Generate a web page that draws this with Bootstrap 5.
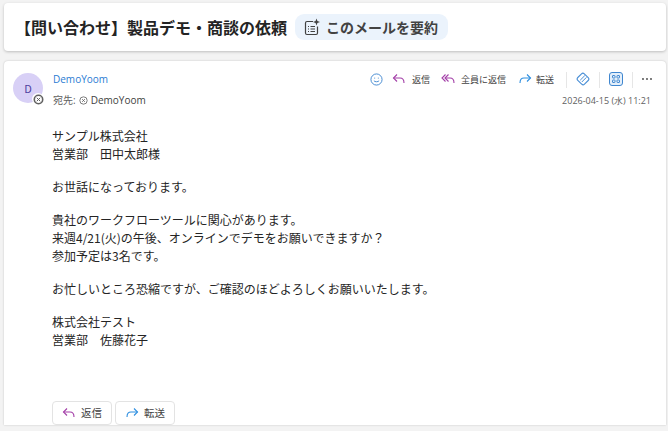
<!DOCTYPE html>
<html lang="ja">
<head>
  <meta charset="UTF-8">
  <meta name="viewport" content="width=device-width, initial-scale=1.0">
  <title>メール</title>
  <link href="https://cdn.jsdelivr.net/npm/bootstrap@5.3.0/dist/css/bootstrap.min.css" rel="stylesheet">
  <style>
    html, body { height: 431px; overflow: hidden; }
    body { background: #f3f3f3; font-family: "Noto Sans CJK JP", "Noto Sans", sans-serif; color: #242424; }
    .mail-page { padding: 3px 2px 0 4px; height: 431px; }
    .subject-bar { height: 48px; background: #fff; border-radius: 4px; box-shadow: 0 1px 3px rgba(0,0,0,.22); padding-left: 11px; }
    .subject-text { font-size: 16px; font-weight: 700; line-height: 24px; }
    .summary-btn { height: 26px; margin-left: 8px; padding: 0 10px 0 8px; background: #ebf3fc; border-radius: 9px; font-size: 14px; font-weight: 700; color: #424242; gap: 5px; }
    .mail-card { margin-top: 10px; height: 364px; background: #fff; border-radius: 4px 4px 0 0; box-shadow: 0 0 2px rgba(0,0,0,.22); position: relative; }
    .mail-head { padding: 12px 13px 0 9px; }
    .avatar-wrap { position: relative; width: 30px; height: 30px; margin-right: 10px; flex: none; }
    .avatar-circle { width: 30px; height: 30px; border-radius: 50%; background: #d8d0f6; color: #4f3f9f; font-size: 11px; }
    .avatar-status { position: absolute; right: -1px; bottom: -2px; width: 12px; height: 12px; border-radius: 50%; background: #fff; }
    .sender-name { font-family: "Open Sans", "Noto Sans CJK JP", sans-serif; font-size: 10px; line-height: 14px; font-weight: 500; color: #2b7cd3; margin-top: -1px; }
    .to-line { font-family: "Open Sans", "Noto Sans CJK JP", sans-serif; font-size: 10px; line-height: 14px; color: #424242; margin-top: 7px; gap: 3px; }
    .to-label { color: #616161; }
    .action-row { margin-top: -4px; height: 22px; font-size: 9px; color: #424242; }
    .action-row svg { margin-top: -2px; }
    .action-item { white-space: nowrap; }
    .action-smile { margin-right: 9px; margin-left: 1px; }
    .reply-item { gap: 6px; margin-right: 11px; }
    .reply-all-item { gap: 5px; margin-right: 12px; }
    .forward-item { gap: 4px; margin-right: 12px; }
    .v-sep { width: 1px; height: 16px; background: #e6e6e6; }
    .action-tool { margin: 0 9px; }
    .mail-date { font-family: "Open Sans", sans-serif; font-size: 9px; line-height: 12px; color: #616161; text-align: right; margin-top: 4px; padding-right: 2px; }
    .mail-body { padding: 20px 0 0 48px; font-size: 12px; line-height: 18px; color: #242424; }
    .mail-body p { margin: 0 0 15px; }
    .foot-actions { position: absolute; left: 48px; bottom: 0; gap: 3px; }
    .foot-btn { width: 60px; height: 24px; background: #fff; border: 1px solid #e3e3e3; border-radius: 4px; font-size: 10.5px; color: #424242; gap: 5px; padding: 0; }
  </style>
</head>
<body>
  <div class="mail-page">
    <!-- Subject -->
    <div class="subject-bar d-flex align-items-center">
      <span class="subject-text">【問い合わせ】製品デモ・商談の依頼</span>
      <span class="summary-btn d-inline-flex align-items-center">
        <svg width="18" height="18" viewBox="0 0 18 18" fill="none" stroke="#424242" stroke-width="1.200">
          <path d="M10 3.500H4a1.500 1.500 0 0 0-1.500 1.500v10a1.500 1.500 0 0 0 1.500 1.500h9a1.500 1.500 0 0 0 1.500-1.500V8.500"/>
          <path d="M5 8.500h1M7.500 8.500h4.500M5 11h1M7.500 11h4.500M5 13.500h1M7.500 13.500h4.500"/>
          <path d="M13.500 .5l.9 2.600 2.600.9-2.600.9-.9 2.600-.9-2.600-2.600-.9 2.600-.9z" fill="#424242" stroke="none"/>
        </svg>
        このメールを要約
      </span>
    </div>

    <div class="mail-card">
      <div class="mail-head d-flex">
        <div class="avatar-wrap">
          <div class="avatar-circle d-flex align-items-center justify-content-center">D</div>
          <span class="avatar-status d-flex align-items-center justify-content-center">
            <svg width="11" height="11" viewBox="0 0 11 11" fill="none" stroke="#616161"><circle cx="5.500" cy="5.500" r="4.200" stroke-width="1.600"/><path d="M3.800 3.800l3.400 3.400M7.200 3.800l-3.400 3.400" stroke-width="1"/></svg>
          </span>
        </div>
        <div class="flex-grow-1">
          <div class="sender-name">DemoYoom</div>
          <div class="to-line d-flex align-items-center">
            <span class="to-label">宛先:</span>
            <svg width="9" height="9" viewBox="0 0 11 11" fill="none" stroke="#616161"><circle cx="5.500" cy="5.500" r="4.500"/><path d="M3.800 3.800l3.400 3.400M7.200 3.800l-3.400 3.400"/></svg>
            <span>DemoYoom</span>
          </div>
        </div>
        <div>
          <div class="action-row d-flex align-items-center">
            <svg class="action-smile" width="13" height="13" viewBox="0 0 14 14" fill="none" stroke="#3f86cf"><circle cx="7" cy="7" r="6"/><path d="M4.200 8.300c.8 1.500 4.800 1.500 5.600 0"/><path d="M5 5v1M9 5v1"/></svg>
            <span class="action-item reply-item d-flex align-items-center">
              <svg width="14" height="12" viewBox="0 0 14 12" fill="none" stroke="#a33fa8" stroke-width="1.100"><path d="M5 1.500L1.500 5 5 8.500"/><path d="M1.500 5H8c2.500 0 4 1.500 4 5"/></svg>
              返信
            </span>
            <span class="action-item reply-all-item d-flex align-items-center">
              <svg width="15" height="12" viewBox="0 0 15 12" fill="none" stroke="#a33fa8" stroke-width="1.100"><path d="M4.500 1.500L1 5l3.500 3.500"/><path d="M7.500 1.500L4 5l3.500 3.500"/><path d="M4 5h5c2.500 0 4 1.500 4 5"/></svg>
              全員に返信
            </span>
            <span class="action-item forward-item d-flex align-items-center">
              <svg width="14" height="12" viewBox="0 0 14 12" fill="none" stroke="#2f8fe0" stroke-width="1.100"><path d="M9 1.500L12.500 5 9 8.500"/><path d="M12.500 5H6c-2.500 0-4 1.500-4 5"/></svg>
              転送
            </span>
            <span class="v-sep"></span>
            <svg class="action-tool" width="14" height="14" viewBox="0 0 14 14" fill="none" stroke="#4a8fd6" stroke-width="1.100"><path d="M5.500 1.800L1.800 5.500a2 2 0 0 0 0 2.800l3.900 3.900a2 2 0 0 0 2.800 0l3.700-3.700a2 2 0 0 0 0-2.800L8.300 1.800a2 2 0 0 0-2.800 0z"/><path d="M4.200 8.200L8.800 3.600M5.800 10L10.400 5.400" stroke-width="1"/></svg>
            <span class="v-sep"></span>
            <svg class="action-tool" width="14" height="14" viewBox="0 0 14 14" fill="none" stroke="#3f86cf"><rect x=".5" y=".5" width="13" height="13" rx="2.500" fill="#e4effa"/><rect x="3.500" y="3.500" width="2.500" height="2.500" rx=".5"/><rect x="8" y="3.500" width="2.500" height="2.500" rx=".5"/><rect x="3.500" y="8" width="2.500" height="2.500" rx=".5"/><rect x="8" y="8" width="2.500" height="2.500" rx=".5"/></svg>
            <span class="v-sep"></span>
            <svg class="ms-2" width="12" height="12" viewBox="0 0 12 12" fill="#424242"><circle cx="2" cy="6" r=".9"/><circle cx="6" cy="6" r=".9"/><circle cx="10" cy="6" r=".9"/></svg>
          </div>
          <div class="mail-date">2026-04-15 (水) 11:21</div>
        </div>
      </div>

      <div class="mail-body">
        <p>サンプル株式会社<br>営業部　田中太郎様</p>
        <p>お世話になっております。</p>
        <p>貴社のワークフローツールに関心があります。<br>来週4/21(火)の午後、オンラインでデモをお願いできますか？<br>参加予定は3名です。</p>
        <p>お忙しいところ恐縮ですが、ご確認のほどよろしくお願いいたします。</p>
        <p>株式会社テスト<br>営業部　佐藤花子</p>
      </div>

      <div class="foot-actions d-flex">
        <button type="button" class="btn foot-btn d-flex align-items-center justify-content-center">
          <svg width="14" height="12" viewBox="0 0 14 12" fill="none" stroke="#a33fa8" stroke-width="1.100"><path d="M5 1.500L1.500 5 5 8.500"/><path d="M1.500 5H8c2.500 0 4 1.500 4 5"/></svg>
          返信
        </button>
        <button type="button" class="btn foot-btn d-flex align-items-center justify-content-center">
          <svg width="14" height="12" viewBox="0 0 14 12" fill="none" stroke="#2f8fe0" stroke-width="1.100"><path d="M9 1.500L12.500 5 9 8.500"/><path d="M12.500 5H6c-2.500 0-4 1.500-4 5"/></svg>
          転送
        </button>
      </div>
    </div>
  </div>
  <script src="https://cdn.jsdelivr.net/npm/bootstrap@5.3.0/dist/js/bootstrap.bundle.min.js"></script>
</body>
</html>
